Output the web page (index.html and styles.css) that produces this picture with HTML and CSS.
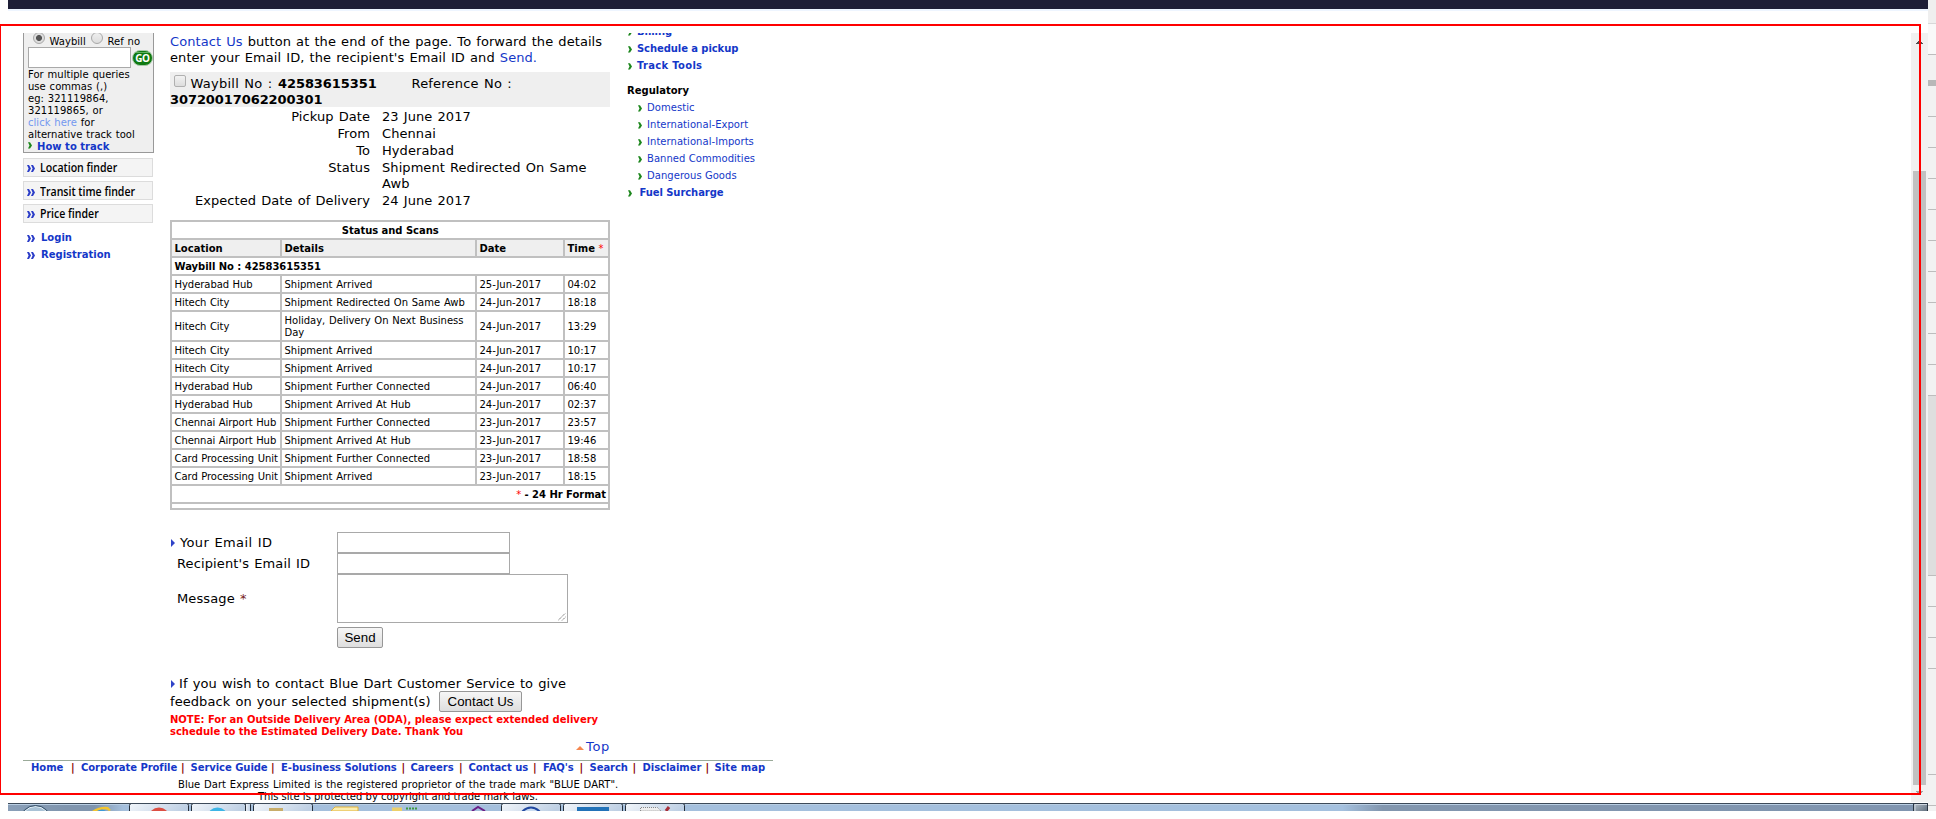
FILE: index.html
```
<!DOCTYPE html>
<html lang="en">
<head>
<meta charset="utf-8">
<title>Waybill tracking</title>
<link rel="stylesheet" href="styles.css">
</head>
<body>
<svg width="0" height="0" class="defs">
  <symbol id="chev" viewBox="0 0 4 7"><path d="M0 .2h2l2 3.2-2 3.200H0l1.500-3.200z" fill="#1c861c"/></symbol>
  <symbol id="dbl" viewBox="0 0 8 7"><path d="M0 0h2l2 3.500-2 3.500H0l1.600-3.500zM4 0h2l2 3.500-2 3.500H4l1.600-3.500z" fill="#2a3cc8"/></symbol>
  <symbol id="tri" viewBox="0 0 4 8"><path d="M0 0l4 4-4 4z" fill="#3044c8"/></symbol>
</svg>
<div class="screen">
  <div class="window">
    <header class="topbar"></header>
    <div class="viewport">
      <div class="page">
        <div class="columns">
          <aside class="left">
            <div class="track">
              <div class="radios"><i class="radio on"></i><span class="r1">Waybill</span><i class="radio"></i><span>Ref no</span></div>
              <div class="query"><input type="text" class="field"><svg width="21" height="16" viewBox="0 0 21 16"><rect x=".5" y=".5" width="20" height="15" rx="7.5" fill="#0f7a12" stroke="#a9c9aa"/><path d="M4 2.500h13" stroke="#5fb05f"/><text x="10.300" y="11.600" text-anchor="middle" class="go">GO</text></svg></div>
              <p>For multiple queries<br>use commas (,)<br>eg: 321119864,<br>321119865, or<br><a class="pale">click here</a> for<br>alternative track tool</p>
              <p class="how"><svg class="chev"><use href="#chev"/></svg><a>How to track</a></p>
            </div>
            <div class="finder f1"><svg class="dbl"><use href="#dbl"/></svg><span>Location finder</span></div>
            <div class="finder f2"><svg class="dbl"><use href="#dbl"/></svg><span>Transit time finder</span></div>
            <div class="finder f3"><svg class="dbl"><use href="#dbl"/></svg><span>Price finder</span></div>
            <div class="account"><svg class="dbl"><use href="#dbl"/></svg><a>Login</a></div>
            <div class="account"><svg class="dbl"><use href="#dbl"/></svg><a>Registration</a></div>
          </aside>
          <main class="main">
            <p class="intro"><a>Contact Us</a> button at the end of the page. To forward the details<br>enter your Email ID, the recipient's Email ID and <a>Send.</a></p>
            <div class="waybill"><i class="check"></i><span class="wl">Waybill No :</span><b class="wn">42583615351</b><span class="rl">Reference No :</span><br><b>30720017062200301</b></div>
            <dl class="facts">
              <dt>Pickup Date</dt><dd>23 June 2017</dd>
              <dt>From</dt><dd>Chennai</dd>
              <dt>To</dt><dd>Hyderabad</dd>
              <dt>Status</dt><dd>Shipment Redirected On Same<br>Awb</dd>
              <dt>Expected Date of Delivery</dt><dd>24 June 2017</dd>
            </dl>
            <div class="scans">
              <div class="full mid">Status and Scans</div>
              <div class="h">Location</div><div class="h">Details</div><div class="h">Date</div><div class="h">Time <em>*</em></div>
              <div class="full">Waybill No : 42583615351</div>
              <div class="loc">Hyderabad Hub</div><div>Shipment Arrived</div><div>25-Jun-2017</div><div>04:02</div>
              <div class="loc">Hitech City</div><div>Shipment Redirected On Same Awb</div><div>24-Jun-2017</div><div>18:18</div>
              <div class="loc">Hitech City</div><div>Holiday, Delivery On Next Business<br>Day</div><div>24-Jun-2017</div><div>13:29</div>
              <div class="loc">Hitech City</div><div>Shipment Arrived</div><div>24-Jun-2017</div><div>10:17</div>
              <div class="loc">Hitech City</div><div>Shipment Arrived</div><div>24-Jun-2017</div><div>10:17</div>
              <div class="loc">Hyderabad Hub</div><div>Shipment Further Connected</div><div>24-Jun-2017</div><div>06:40</div>
              <div class="loc">Hyderabad Hub</div><div>Shipment Arrived At Hub</div><div>24-Jun-2017</div><div>02:37</div>
              <div class="loc">Chennai Airport Hub</div><div>Shipment Further Connected</div><div>23-Jun-2017</div><div>23:57</div>
              <div class="loc">Chennai Airport Hub</div><div>Shipment Arrived At Hub</div><div>23-Jun-2017</div><div>19:46</div>
              <div class="loc">Card Processing Unit</div><div>Shipment Further Connected</div><div>23-Jun-2017</div><div>18:58</div>
              <div class="loc">Card Processing Unit</div><div>Shipment Arrived</div><div>23-Jun-2017</div><div>18:15</div>
              <div class="full end"><em>*</em>&nbsp;- 24 Hr Format</div>
              <div class="full"></div>
            </div>
            <div class="form">
              <label class="first"><svg class="tri"><use href="#tri"/></svg>Your Email ID</label><input type="text" class="field">
              <label>Recipient's Email ID</label><input type="text" class="field">
              <label>Message <em>*</em></label><div class="area"><svg width="8" height="8"><path d="M0 7.500L7.500 0M4 7.500L7.500 4" stroke="#777" stroke-dasharray="1.4 .6"/></svg></div>
              <button class="btn send">Send</button>
            </div>
            <p class="contact"><svg class="tri"><use href="#tri"/></svg>If you wish to contact Blue Dart Customer Service to give</p>
            <div class="feedback"><span>feedback on your selected shipment(s)</span><button class="btn">Contact Us</button></div>
            <p class="note">NOTE: For an Outside Delivery Area (ODA), please expect extended delivery<br>schedule to the Estimated Delivery Date. Thank You</p>
            <div class="top"><svg width="8" height="4"><path d="M0 4l4-4 4 4z" fill="#f5874f"/></svg><a>Top</a></div>
          </main>
          <aside class="right">
            <p><svg class="chev"><use href="#chev"/></svg><a>Billing</a></p>
            <p><svg class="chev"><use href="#chev"/></svg><a>Schedule a pickup</a></p>
            <p><svg class="chev"><use href="#chev"/></svg><a class="tt">Track Tools</a></p>
            <h3>Regulatory</h3>
            <p class="sub"><svg class="chev"><use href="#chev"/></svg><a>Domestic</a></p>
            <p class="sub"><svg class="chev"><use href="#chev"/></svg><a>International-Export</a></p>
            <p class="sub"><svg class="chev"><use href="#chev"/></svg><a>International-Imports</a></p>
            <p class="sub"><svg class="chev"><use href="#chev"/></svg><a>Banned Commodities</a></p>
            <p class="sub"><svg class="chev"><use href="#chev"/></svg><a>Dangerous Goods</a></p>
            <p class="fuel"><svg class="chev"><use href="#chev"/></svg><a>Fuel Surcharge</a></p>
          </aside>
        </div>
        <footer class="footer">
          <nav><a>Home</a><i>|</i><a>Corporate Profile</a><i>|</i><a>Service Guide</a><i>|</i><a>E-business Solutions</a><i>|</i><a>Careers</a><i>|</i><a>Contact us</a><i>|</i><a>FAQ's</a><i>|</i><a>Search</a><i>|</i><a>Disclaimer</a><i>|</i><a>Site map</a></nav>
          <p class="c1">Blue Dart Express Limited is the registered proprietor of the trade mark "BLUE DART".</p>
          <p class="c2">This site is protected by copyright and trade mark laws.</p>
        </footer>
      </div>
      <div class="scroll">
        <svg width="7" height="4"><path d="M0 3.500h7M1 2.500h5M2 1.500h3M3 .5h1" stroke="#505050"/></svg>
        <div class="thumb"></div>
        <svg class="down" width="7" height="4"><path d="M0 .5h7M1 1.500h5M2 2.500h3M3 3.500h1" stroke="#a3a3a3"/></svg>
      </div>
    </div>
    <svg class="taskbar" width="1920" height="8" viewBox="8 0 1920 8">
      <defs>
        <linearGradient id="bar" gradientUnits="userSpaceOnUse" x1="8" y1="0" x2="1928" y2="0">
          <stop offset="0" stop-color="#8a9fb8"/><stop offset=".03" stop-color="#8095ae"/><stop offset=".045" stop-color="#8095ae"/><stop offset=".06" stop-color="#a5bfdc"/><stop offset=".695" stop-color="#a5c1df"/><stop offset=".716" stop-color="#8296ae"/><stop offset="1" stop-color="#8095b0"/>
        </linearGradient>
        <linearGradient id="tab" x1="0" x2="1" y1="0" y2=".2"><stop offset="0" stop-color="#f1f5fa"/><stop offset="1" stop-color="#bfd0e4"/></linearGradient>
        <linearGradient id="desk" x1="0" x2="1" y1="0" y2="1"><stop offset="0" stop-color="#b4bfca"/><stop offset="1" stop-color="#566473"/></linearGradient>
      </defs>
      <rect x="8" width="1920" height="8" fill="url(#bar)"/>
      <path d="M8 1.500h1920" stroke="#b9cee3"/>
      <g fill="url(#tab)" stroke="#26303c">
        <rect x="245.500" y=".5" width="5" height="10" rx="1"/>
        <rect x="129.500" y=".5" width="59" height="10" rx="2"/><rect x="191.500" y=".5" width="54" height="10" rx="2"/><rect x="253.500" y=".5" width="59" height="10" rx="2"/>
        <rect x="501.500" y=".5" width="59" height="10" rx="2"/><rect x="563.500" y=".5" width="59" height="10" rx="2"/><rect x="625.500" y=".5" width="59" height="10" rx="2"/>
      </g>
      <circle cx="35.500" cy="18" r="14.500" fill="#a9c2d6" stroke="#e8f2f8"/><circle cx="35.500" cy="18" r="15.500" fill="none" stroke="#37536c"/>
      <path d="M92 8q8-5 16-4l3 3-2 1q-3-4-14 1z" fill="#f4c52e"/><path d="M97 8q5-3 9 0z" fill="#3d9ad8"/>
      <circle cx="159" cy="15" r="10.500" fill="#dc4f43"/><circle cx="217.500" cy="15" r="10.500" fill="#3db5e6"/>
      <path d="M269 8V5h14v3z" fill="#c8ad6a"/>
      <path d="M331 8l4-4h23v4z" fill="#fbeeb0" stroke="#e0b23c"/>
      <path d="M392 8V4.500h10V8z" fill="#ecd06a"/><path d="M406 5.500h12" stroke="#3f9a3f" stroke-width="2" stroke-dasharray="2 1"/>
      <path d="M472 8l6-4 7 4" fill="none" stroke="#6b2088" stroke-width="2"/>
      <circle cx="531" cy="15.500" r="11" fill="#c9dcf2" stroke="#2148a0" stroke-width="2"/>
      <path d="M577 4h32v4h-32z" fill="#2272b8"/>
      <path d="M640.500 8V4.500h17L661 8z" fill="#eee" stroke="#888" stroke-dasharray="1 1"/><path d="M666 8l3-4" stroke="#a8303a" stroke-width="3"/>
      <path d="M8 .5h1920" stroke="#3d4a59"/>
      <rect x="1913.500" y=".5" width="14" height="10" fill="url(#desk)" stroke="#2b3745"/><path d="M1915 8V1.500h12" fill="none" stroke="#cdd6df"/>
    </svg>
  </div>
  <div class="strip">
    <svg width="8" height="811">
      <rect width="8" height="811" fill="#f2f2f2"/><rect width="8" height="23" fill="#efefef"/><rect y="24" width="8" height="30" fill="#f9f9f9"/>
      <rect y="396" width="8" height="179" fill="#dedede"/><rect y="80" width="8" height="6" fill="#b8b8b8"/><path d="M0 23.500h8" stroke="#d8d8d8"/>
      <path d="M0 54.500h8M0 116.500h8M0 147.500h8M0 178.500h8M0 209.500h8M0 240.500h8M0 271.500h8M0 302.500h8M0 333.500h8M0 364.500h8M0 395.500h8M0 575.500h8M0 606.500h8M0 637.500h8M0 668.500h8M0 774.500h8M0 805.500h8" stroke="#bdbdbd"/>
    </svg>
  </div>
  <div class="frame"></div>
</div>
</body>
</html>
```
FILE: styles.css
```
* { box-sizing: border-box; }
body { margin: 0; background: #fff; overflow: hidden; font: 10px/12px "DejaVu Sans", Verdana, sans-serif; color: #000; }
p, dl, dd, h3 { margin: 0; }
svg { display: block; flex: none; }
i { font-style: normal; }
em { font-style: normal; color: #f00; font-weight: 400; }
a { color: #1437c8; }
.defs { position: absolute; }
.screen { position: relative; display: flex; width: 1936px; height: 819px; padding-left: 8px; white-space: nowrap; }
.window { width: 1920px; display: flex; flex-direction: column; }
.topbar { height: 11px; margin-bottom: 22px; background: #1e1e36; border-bottom: 2px solid #eef5ff; }
.viewport { height: 770px; display: flex; justify-content: space-between; overflow: hidden; }
.page { width: 765px; padding-left: 15px; }
.columns { display: flex; height: 727px; }

/* left column */
.left { width: 131px; margin-right: 16px; }
.track { height: 120px; padding-left: 4px; background: #efefef; border: 1px solid #999; border-top: 0; word-spacing: .6px; letter-spacing: .03px; }
.radios { display: flex; height: 14px; padding: 3px 0 0 5px; }
.radio { width: 12px; height: 12px; margin-top: -4px; border: 1px solid #a8a8a8; border-radius: 50%; background: linear-gradient(#eee, #ddd); }
.radio.on { background: radial-gradient(circle, #555 0 2.6px, #ddd 3.4px); }
.radios span { margin-left: 4.500px; }
.r1 { width: 37px; margin-right: 4.500px; }
.query { display: flex; align-items: center; gap: 1px; margin-bottom: 1px; }
.query .field { width: 103px; }
.query svg { margin-left: -.5px; }
.field { height: 21px; padding: 0; border: 1px solid #a9a9a9; background: #fff; }
.go { font: 700 10px "Open Sans", sans-serif; fill: #fff; letter-spacing: -.5px; word-spacing: 0; }
.pale { color: #7398f0; }
.how { display: flex; align-items: center; font-weight: 700; word-spacing: 0; }
.chev { width: 4px; height: 7px; }
.how .chev { margin: -3px 5px 0 0; }
.finder { display: flex; align-items: center; width: 130px; height: 19px; padding-left: 3px; background: #f4f4f4; border: 1px solid #dcdcdc; font: 600 12px/17px "Open Sans", sans-serif; }
.dbl { width: 8px; height: 7px; margin-top: 2px; }
.finder span { margin-left: 4.500px; transform: scaleX(.88); transform-origin: left; }
.f1 { margin-top: 5px; }
.f2 { margin-top: 4px; padding-top: 1px; }
.f3 { margin: 4px 0 6px; }
.account { display: flex; align-items: center; height: 17px; padding-left: 4px; font-weight: 700; }
.account a { margin-left: 6px; }

/* main column */
.main { width: 440px; margin-right: 17px; padding-top: 1px; font-size: 13px; line-height: 16px; letter-spacing: .07px; word-spacing: .9px; }
.main b { letter-spacing: -.08px; }
.waybill { height: 35px; margin: 6px 0 2px; padding-top: 4px; background: #efefef; }
.check { display: inline-block; width: 12px; height: 12px; margin: -1px 4.500px 0 4px; vertical-align: top; border: 1px solid #b0b0b0; border-radius: 2px; background: linear-gradient(#f2f2f2, #ddd); }
.wl { display: inline-block; width: 87.500px; letter-spacing: .25px; }
.wn { display: inline-block; width: 133.500px; }
.rl { letter-spacing: .2px; }
.facts { display: grid; grid-template-columns: 200px 1fr; column-gap: 12px; row-gap: 1px; }
.facts dt { text-align: right; }
.scans { display: grid; grid-template-columns: 108px 193px 86px 43px; grid-auto-rows: auto; gap: 2px; margin-top: 11px; padding: 2px; background: #c0c0c0; font-size: 10px; line-height: 12px; letter-spacing: 0; word-spacing: .6px; }
.scans > div { display: flex; flex-wrap: wrap; align-items: center; align-content: center; padding: 3px 2px 1px 2.500px; background: #fff; white-space: pre; }
.scans > .loc { letter-spacing: -.05px; word-spacing: .4px; }
.scans > .full { grid-column: 1 / -1; font-weight: 700; letter-spacing: -.04px; word-spacing: 0; }
.scans > .mid { justify-content: center; }
.scans > .end { justify-content: flex-end; }
.scans > .h { background: #efefef; font-weight: 700; letter-spacing: 0; word-spacing: 0; }
.form { display: grid; grid-template-columns: 167px 1fr; grid-template-rows: 21px 21px 49px 29px; align-items: center; justify-items: start; margin-top: 22px; }
.form label { padding-left: 7px; letter-spacing: .12px; }
.form .first { display: flex; align-items: center; padding-left: 1px; letter-spacing: .35px; }
.form .field { width: 173px; }
.form em { color: #722; }
.tri { width: 4px; height: 8px; }
.first .tri { margin-right: 5px; }
.area { display: flex; align-items: flex-end; justify-content: flex-end; width: 231px; height: 49px; padding: 1px; border: 1px solid #a9a9a9; }
.btn { height: 21px; margin: 0; padding: 0; border: 1px solid #979797; border-radius: 2px; background: linear-gradient(#f6f6f6, #dedede); font: 13.300px/18px "Liberation Sans", Arial, sans-serif; color: #000; }
.send { grid-column: 2; width: 46px; align-self: end; margin-bottom: 4px; }
.contact { display: flex; align-items: center; margin-top: 24px; padding-left: 1px; letter-spacing: .08px; }
.contact .tri { margin-right: 4px; }
.feedback { display: flex; height: 21px; margin-top: -1px; }
.feedback span { width: 269px; padding-top: 3px; letter-spacing: .07px; }
.feedback .btn { width: 83px; }
.note { margin-top: 2px; font-size: 10px; line-height: 12px; font-weight: 700; letter-spacing: -.01px; word-spacing: 0; color: #f00; }
.top { display: flex; align-items: center; justify-content: flex-end; gap: 2px; margin-top: 1px; letter-spacing: .7px; }
.top svg { margin-top: 1px; }

/* right column */
.right { display: flex; flex-direction: column; width: 146px; font-weight: 700; line-height: 17px; margin-top: -10px; }
.right p { display: flex; align-items: center; padding-left: 1px; letter-spacing: -.08px; }
.right .chev { margin-right: 5px; margin-top: 2px; }
.right h3 { margin-top: 8px; font-size: 10px; line-height: 17px; }
.right .sub { padding-left: 11px; font-weight: 400; letter-spacing: .05px; }
.right .tt { letter-spacing: .3px; }
.right .fuel .chev { margin-right: 7.500px; }

/* footer */
.footer { width: 750px; border-top: 1px solid #9aaa99; }
.footer nav { display: grid; grid-template-columns: 40px 10px 100px 9.500px 80.500px 10px 120.500px 9px 48.500px 9.500px 64.500px 10px 36.500px 10px 43px 10px 63px 9px 60px; padding: 1px 0 5px 8px; font-weight: 700; letter-spacing: -.05px; }
.footer nav i { color: #800; }
.footer nav i + a:last-child { letter-spacing: .1px; }
.c1 { padding-left: 155px; letter-spacing: .03px; word-spacing: .6px; }
.c2 { padding-left: 235px; }

/* scrollbar */
.scroll { display: flex; flex-direction: column; align-items: center; width: 17px; padding-top: 7px; height: 769px; background: #f1f1f1; }
.thumb { width: 13px; height: 614px; margin: 127px 0 6px; background: #c1c1c1; }
.taskbar { width: 1920px; height: 8px; }
.strip { width: 8px; height: 811px; }
.frame { position: absolute; left: -1px; top: 24px; width: 1922px; height: 771px; border: 2px solid #f00; }
```
